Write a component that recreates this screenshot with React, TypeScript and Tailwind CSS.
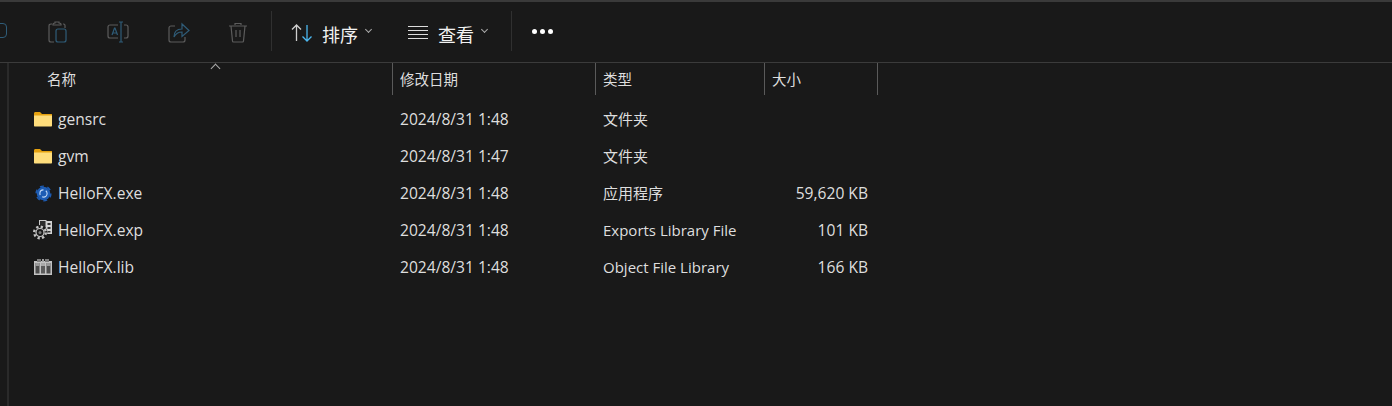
const font = "font-['Open_Sans','Noto_Sans_CJK_SC',sans-serif]";

const cols = ["w-[203px]", "w-[169px]", "w-[113px]"];

function Folder() {
  return (
    <svg width="20" height="15" viewBox="0 0 20 15">
      <path d="M1 1.500C1 .7 1.500 0 2.500 0H7l2 2h9.500c.5 0 .5.500.5 1v1H1z" fill="#e5a10f" />
      <path d="M1 3.500h18V13.500c0 .6-.4 1-1 1H2c-.6 0-1-.4-1-1z" fill="#fedd7c" />
    </svg>
  );
}

function ExeIcon() {
  return (
    <svg width="17" height="17" viewBox="0 0 17 17">
      <circle cx="8.500" cy="8.500" r="6.800" fill="#1d5cb4" />
      <circle cx="8.500" cy="8.500" r="7.400" fill="none" stroke="#1d5cb4" strokeWidth="1.400" strokeDasharray="4 3.750" />
      <circle cx="8.500" cy="8.500" r="3.600" fill="none" stroke="#c0d8f5" strokeWidth="1.100" strokeDasharray="7 2.500" />
    </svg>
  );
}

function ExpIcon() {
  return (
    <svg width="20" height="20" viewBox="0 0 20 20">
      <rect x="6.500" y=".5" width="6.500" height="13" fill="#2c2c2c" stroke="#c8c8c8" />
      <rect x="13" y="1" width="6" height="13" fill="#d2d2d2" />
      <rect x="14.500" y="3" width="3" height="2" fill="#333" />
      <rect x="14.500" y="7" width="3" height="2" fill="#333" />
      <rect x="14.500" y="11" width="3" height="1.500" fill="#333" />
      <circle cx="7" cy="12.500" r="7.400" fill="#191919" />
      <circle cx="7" cy="12.500" r="5.800" fill="none" stroke="#c4c4c4" strokeWidth="2.400" strokeDasharray="2.300 2.250" />
      <circle cx="7" cy="12.500" r="4" fill="none" stroke="#c4c4c4" strokeWidth="1.200" />
      <circle cx="7" cy="12.500" r="1.500" fill="#7a7a7a" />
    </svg>
  );
}

function LibIcon() {
  return (
    <svg width="18" height="16" viewBox="0 0 18 16">
      <rect x="0" y="2" width="18" height="14" fill="#c2c2c2" />
      <rect x="3" y="0" width="4" height="3" fill="#7c7c7c" />
      <rect x="8" y="0" width="2" height="3" fill="#a0a0a0" />
      <rect x="11" y="0" width="4" height="3" fill="#7c7c7c" />
      <rect x="1.500" y="4" width="4" height="10.500" fill="#4c4c4c" />
      <rect x="7" y="4" width="4" height="10.500" fill="#5c5c5c" />
      <rect x="12.500" y="4" width="4" height="10.500" fill="#4c4c4c" />
      <rect x="1.500" y="4" width="4" height="3" fill="#9a9a9a" />
      <rect x="7" y="4" width="4" height="3" fill="#a8a8a8" />
      <rect x="12.500" y="4" width="4" height="3" fill="#9a9a9a" />
    </svg>
  );
}

const rows = [
  { name: "gensrc", date: "2024/8/31 1:48", type: "文件夹", size: "", icon: <Folder /> },
  { name: "gvm", date: "2024/8/31 1:47", type: "文件夹", size: "", icon: <Folder /> },
  { name: "HelloFX.exe", date: "2024/8/31 1:48", type: "应用程序", size: "59,620 KB", icon: <ExeIcon /> },
  { name: "HelloFX.exp", date: "2024/8/31 1:48", type: "Exports Library File", size: "101 KB", icon: <ExpIcon /> },
  { name: "HelloFX.lib", date: "2024/8/31 1:48", type: "Object File Library", size: "166 KB", icon: <LibIcon /> },
];

function ToolIcons() {
  return (
    <>
      <svg width="24" height="24" viewBox="0 0 24 24" fill="none" strokeWidth="1.2" className="absolute left-[46px] top-[18px]">
        <path d="M6 4H5C3.700 4 3 4.700 3 6v14c0 1.300.7 2 2 2h3" stroke="#5c5c5c" />
        <path d="M7 4c0-1 1-1 2-1V2h4v1c1 0 2 0 2 1v1H7z" stroke="#5c5c5c" />
        <path d="M17 4h.5c1 0 1.500.7 1.500 1.500V8" stroke="#5c5c5c" />
        <rect x="10" y="9" width="10" height="13" rx="2" stroke="#2f5c78" />
      </svg>
      <svg width="24" height="24" viewBox="0 0 24 24" fill="none" strokeWidth="1.2" className="absolute left-[106px] top-[18px]">
        <path d="M12 5H4a2 2 0 0 0-2 2v9a2 2 0 0 0 2 2h8M18 5h2a2 2 0 0 1 2 2v9a2 2 0 0 1-2 2h-2" stroke="#5c5c5c" />
        <path d="M15 2v20M13 2h4M13 22h4M6 15l2.500-7h.5l2.500 7M7 13h4" stroke="#2f5c78" />
      </svg>
      <svg width="24" height="24" viewBox="0 0 24 24" fill="none" strokeWidth="1.2" className="absolute left-[166px] top-[18px]">
        <path d="M9 6H5a2 2 0 0 0-2 2v12a2 2 0 0 0 2 2h12a2 2 0 0 0 2-2v-3" stroke="#5c5c5c" />
        <path d="M8 17c0-5 3-8 8-8V4l7 6.500-7 6V12c-3 0-6 1-8 5z" stroke="#2f5c78" />
      </svg>
      <svg width="24" height="24" viewBox="0 0 24 24" fill="none" strokeWidth="1.2" stroke="#5c5c5c" className="absolute left-[226px] top-[18px]">
        <path d="M3 6h18M9 5V3.500h6V5M5 6l1.500 15c0 .6.500 1 1 1h9c.5 0 1-.4 1-1L19 6M10 10v7M14 10v7" />
      </svg>
    </>
  );
}

export default function App() {
  return (
    <div className={`relative h-[406px] w-[1392px] overflow-hidden bg-[#191919] text-[15.6px] text-[#dedede] ${font}`}>
      <div className="h-[2px] bg-[#3a3a3a]" />
      <div className="relative h-[61px] border-b border-[#3b3b3b]">
        <div className="absolute left-[-10px] top-[21px] h-[15px] w-[17px] rounded-[4px] border border-[#2f5c78]" />
        <ToolIcons />
        <div className="flex h-full items-center pl-[271px] text-[#f2f2f2]">
          <div className="mb-[2px] h-[40px] w-px bg-[#303030]" />
          <div className="flex w-[239px] items-center">
            <svg width="22" height="18" viewBox="0 0 22 18" fill="none" strokeWidth="1.300" className="ml-[19px] mt-[2px]">
              <path d="M5.500 17V1M1 5.500 5.500 1 10 5.500" stroke="#cfcfcf" />
              <path d="M16 1v16M11.500 12.500 16 17l4.500-4.500" stroke="#4cb8f0" />
            </svg>
            <span className="ml-[9px] mt-[5px] text-[18px] leading-[24px]">排序</span>
            <span className="ml-[8px] mb-[5px] h-[5px] w-[5px] rotate-45 border-b border-r border-[#aaa]" />
            <span className="ml-[37px] mt-[1px] flex h-[14px] w-[20px] flex-col justify-between">
              <i className="h-px bg-[#ddd]" />
              <i className="h-px bg-[#ddd]" />
              <i className="h-px bg-[#ddd]" />
              <i className="h-px bg-[#ddd]" />
            </span>
            <span className="ml-[10px] mt-[5px] text-[18px] leading-[24px]">查看</span>
            <span className="ml-[8px] mb-[5px] h-[5px] w-[5px] rotate-45 border-b border-r border-[#aaa]" />
          </div>
          <div className="mb-[2px] h-[40px] w-px bg-[#303030]" />
          <div className="mb-[1px] ml-[20px] flex gap-[3px]">
            <i className="h-[5px] w-[5px] rounded-full bg-white" />
            <i className="h-[5px] w-[5px] rounded-full bg-white" />
            <i className="h-[5px] w-[5px] rounded-full bg-white" />
          </div>
        </div>
      </div>
      <div className="flex">
        <div className="h-[343px] w-[9px] border-r-[2px] border-[#2a2a2a]" />
        <div className="flex-1">
          <div className="relative flex h-[32px] items-center text-[14.5px]">
            <div className="flex h-full w-[384px] items-center border-r border-[#5a5a5a] pl-[38px] pt-[1px]">名称</div>
            <div className={`flex h-full items-center border-r border-[#5a5a5a] pl-[7px] pt-[1px] ${cols[0]}`}>修改日期</div>
            <div className={`flex h-full items-center border-r border-[#5a5a5a] pl-[7px] pt-[1px] ${cols[1]}`}>类型</div>
            <div className={`flex h-full items-center border-r border-[#5a5a5a] pl-[7px] pt-[1px] ${cols[2]}`}>大小</div>
            <span className="absolute left-[203px] top-[2px] h-[7px] w-[7px] rotate-45 border-l border-t border-[#aaa]" />
          </div>
          <div className="pt-[6px]">
            {rows.map((r) => (
              <div key={r.name} className="flex h-[37px] items-center">
                <div className="flex w-[384px] items-center pl-[24px]">
                  <span className="flex w-[20px] justify-center">{r.icon}</span>
                  <span className="ml-[5px]">{r.name}</span>
                </div>
                <div className={`pl-[7px] ${cols[0]}`}>{r.date}</div>
                <div className={`pl-[7px] text-[15px] ${cols[1]}`}>{r.type}</div>
                <div className={`pr-[10px] text-right ${cols[2]}`}>{r.size}</div>
              </div>
            ))}
          </div>
        </div>
      </div>
    </div>
  );
}
